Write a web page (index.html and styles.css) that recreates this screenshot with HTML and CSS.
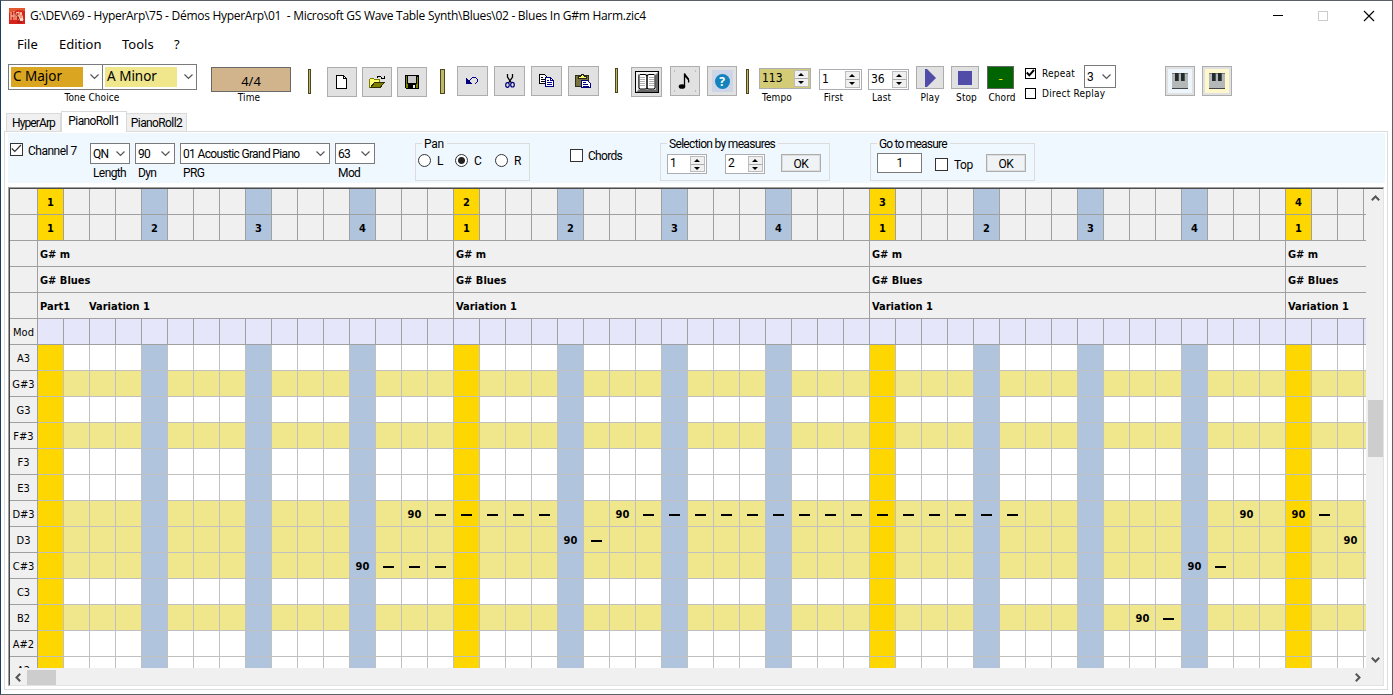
FILE: index.html
```
<!DOCTYPE html>
<html lang="en">
<head>
<meta charset="utf-8">
<title>HyperArp</title>
<link rel="stylesheet" href="styles.css">
</head>
<body>
<div class="window">
  <header class="titlebar">
    <svg class="app-icon" width="16" height="16" viewBox="0 0 16 16"><rect width="16" height="16" fill="#d8231c"/><path d="M0 0h16v3L9 2 0 5z" fill="#e2592f"/><path d="M2 4v8M5 3v9M2 8h3M7 12V5l3-1v4H7M10 12l2-8 2 8M10 9h4" stroke="#f9d9b0" fill="none"/><path d="M5 4l6 8M8 14h5" stroke="#59130d" opacity=".6"/><rect x="11" y="10" width="3" height="3" fill="#ffd8cf"/></svg>
    <span class="title">G:\DEV\69 - HyperArp\75 - Démos HyperArp\01&nbsp; - Microsoft GS Wave Table Synth\Blues\02 - Blues In G#m Harm.zic4</span>
    <svg class="winctl" width="104" height="12" viewBox="0 0 104 12"><path d="M0 5.500h10" stroke="#000"/><rect x="45.500" y="1.500" width="9" height="9" fill="none" stroke="#ccc"/><path d="M91 1l10 10M101 1L91 11" stroke="#000" stroke-width="1.100"/></svg>
  </header>
  <nav class="menu"><span class="m-file">File</span><span class="m-edit">Edition</span><span class="m-tools">Tools</span><span>?</span></nav>

  <div class="toolbar">
    <div class="tone">
      <div class="tone-boxes">
        <div class="bigcombo"><span class="major">C Major</span><svg width="9" height="6" viewBox="0 0 9 6"><path d="M.5.5l4 4 4-4" fill="none" stroke="#555" stroke-width="1.200"/></svg></div>
        <div class="bigcombo second"><span class="minor">A Minor</span><svg width="9" height="6" viewBox="0 0 9 6"><path d="M.5.5l4 4 4-4" fill="none" stroke="#555" stroke-width="1.200"/></svg></div>
      </div>
      <span class="lbl tone-lbl">Tone Choice</span>
    </div>
    <div class="time"><div class="time-box">4/4</div><span class="lbl">Time</span></div>
    <i class="sep s1"></i>
    <button class="tb new"><svg width="12" height="14" viewBox="0 0 12 14" shape-rendering="crispEdges"><path d="M.5.500h7l3 3v9.500h-10z" fill="#fff" stroke="#000"/><path d="M7.500.500v3h3" fill="none" stroke="#000"/></svg></button>
    <button class="tb open"><svg width="17" height="14" viewBox="0 0 17 14" shape-rendering="crispEdges"><path d="M.5 12.500v-8l1-1h3l1 1h5v3h-5l-4 5z" fill="#ffff70" stroke="#808000"/><path d="M1.500 12.500l4-5h10l-4.500 5z" fill="#808000" stroke="#303000"/><path d="M8 2.500l1-1h2l3 2M12 3.500h3v-3" fill="none" stroke="#000"/></svg></button>
    <button class="tb save"><svg width="15" height="14" viewBox="0 0 15 14" shape-rendering="crispEdges"><path d="M.5.500h13v13h-12l-1-1z" fill="#808000" stroke="#000"/><path d="M3 1h8v7H3z" fill="#c8c8c8"/><path d="M3 9h8v5H3zM12 1h1v1h-1z" fill="#000"/><path d="M8 10h2v3H8z" fill="#e8e8e8"/><path d="M2.500 1v7h9V1" stroke="#000" fill="none"/></svg></button>
    <i class="sep s2"></i>
    <button class="tb undo"><svg width="13" height="8" viewBox="0 0 13 8" shape-rendering="crispEdges"><path d="M0 1h1v1h1v1h1v1h1v1h1v1h1v1H0zM3 3h1V2h1V1h1V0h4v1H6v1H5v1H4v1H3zM10 1h1v1h-1zM11 2h1v3h-1zM10 5h1v1h-1zM9 6h1v1H9z" fill="#000080"/></svg></button>
    <button class="tb cut"><svg width="10" height="14" viewBox="0 0 10 14"><path d="M2.500 0v3l4 6M7.500 0v3l-4 6" fill="none" stroke="#000" stroke-width="1.300"/><ellipse cx="2.500" cy="11" rx="1.800" ry="2.300" fill="none" stroke="#000080" stroke-width="1.200"/><ellipse cx="7.500" cy="10.700" rx="1.800" ry="2.300" fill="none" stroke="#000080" stroke-width="1.200"/></svg></button>
    <button class="tb copy"><svg width="16" height="14" viewBox="0 0 16 14" shape-rendering="crispEdges"><path d="M.5.500h5l3 3v6h-8z" fill="#fff" stroke="#000"/><path d="M2 3.500h2M2 5.500h4M2 7.500h4" stroke="#000"/><path d="M6.500 3.500h5l3 3v6h-8z" fill="#fff" stroke="#000080"/><path d="M11.500 3.500v3h3M8 6.500h2M8 8.500h5M8 10.500h5" stroke="#000080" fill="none"/></svg></button>
    <button class="tb paste"><svg width="17" height="15" viewBox="0 0 17 15" shape-rendering="crispEdges"><rect x=".5" y="1.500" width="13" height="11" fill="#77733b" stroke="#303018"/><path d="M3.500 4.500v-2h2l1-2h2l1 2h2v2z" fill="#ffff66" stroke="#222"/><path d="M6.500 6.500h6l3 3v4h-9z" fill="#fff" stroke="#000080"/><path d="M8 8.500h3M8 10.500h5M8 12.500h6" stroke="#000080"/></svg></button>
    <i class="sep s3"></i>
    <button class="tb book"><svg width="24" height="22" viewBox="0 0 24 22"><rect x=".5" y=".5" width="23" height="21" fill="#9d9d9d" stroke="#000"/><path d="M1 21V1h22l-2 2H3v16z" fill="#f4f4f4"/><path d="M23 2v19H2l2-2h17V4z" fill="#686868"/><rect x="3" y="3" width="18" height="16" fill="#b4b4b4"/><path d="M4 4.500l1-1h5l2 1 2-1h5l1 1V17l-1 1h-5l-2-.500-2 .500H5l-1-1z" fill="#fff" stroke="#000"/><path d="M5 6.500h5M5 8.500h5M5 10.500h5M5 12.500h5M5 14.500h5M14 6.500h5M14 8.500h5M14 10.500h5M14 12.500h5M14 14.500h5" stroke="#b0b0b0"/><path d="M12 4v14" stroke="#000" stroke-width="1.500"/></svg></button>
    <button class="tb note"><svg width="24" height="22" viewBox="0 0 24 22"><path d="M1 1h1M22 1h1M1 21h1M22 21h1" stroke="#999"/><ellipse cx="9" cy="16.500" rx="3.300" ry="2.300" fill="#000"/><path d="M11.500 16V3.500c1 4 5.500 4 4 9" fill="none" stroke="#000" stroke-width="1.300"/><path d="M12 4l4 5-1 1-3-3z"/></svg></button>
    <button class="tb help"><span class="help-bg"><span class="help-dot">?</span></span></button>
    <i class="sep s4"></i>
    <div class="field tempo"><div class="spin"><span>113</span><i class="ud"></i></div><span class="lbl">Tempo</span></div>
    <div class="field first"><div class="spin"><span>1</span><i class="ud"></i></div><span class="lbl">First</span></div>
    <div class="field last"><div class="spin"><span>36</span><i class="ud"></i></div><span class="lbl">Last</span></div>
    <div class="act play"><button><svg width="11" height="18" viewBox="0 0 11 18"><path d="M0 0h2l9 9-9 9H0z" fill="#504ca8"/></svg></button><span class="lbl">Play</span></div>
    <div class="act stop"><button><svg width="14" height="14"><rect width="14" height="14" fill="#504ca8"/></svg></button><span class="lbl">Stop</span></div>
    <div class="act chord"><button>-</button><span class="lbl">Chord</span></div>
    <div class="opts">
      <div class="opt"><i class="cb"><svg width="9" height="8" viewBox="0 0 9 8"><path d="M.8 3.500l2.500 2.800L8 1" fill="none" stroke="#000" stroke-width="2"/></svg></i><span>Repeat</span></div>
      <div class="opt"><i class="cb"></i><span>Direct Replay</span></div>
    </div>
    <div class="rep-combo"><span>3</span><svg width="9" height="6" viewBox="0 0 9 6"><path d="M.5.5l4 4 4-4" fill="none" stroke="#555" stroke-width="1.200"/></svg></div>
    <button class="tb piano p1"><span><svg width="16" height="16" viewBox="0 0 16 16" shape-rendering="crispEdges"><rect width="16" height="16" fill="#b4b8b9"/><path d="M0 0h16v1H0z" fill="#777"/><path d="M0 15h16v1H0z" fill="#444"/><path d="M3 0h4v8H3zM9 0h4v8H9z" fill="#222b2b"/><path d="M6 0h1v8H6zM12 0h1v8h-1z" fill="#4a5454"/></svg></span></button>
    <button class="tb piano p2"><span><svg width="16" height="16" viewBox="0 0 16 16" shape-rendering="crispEdges"><rect width="16" height="16" fill="#b4b8b9"/><path d="M0 0h16v1H0z" fill="#777"/><path d="M0 15h16v1H0z" fill="#444"/><path d="M3 0h4v8H3zM9 0h4v8H9z" fill="#222b2b"/><path d="M6 0h1v8H6zM12 0h1v8h-1z" fill="#4a5454"/></svg></span></button>
  </div>

  <div class="tabs"><span class="tab t1">HyperArp</span><span class="tab active">PianoRoll1</span><span class="tab t3">PianoRoll2</span></div>

  <main class="page">
    <div class="params">
      <div class="chan"><i class="box"><svg width="11" height="9" viewBox="0 0 11 9"><path d="M.8 4.500l3 3L10 1" fill="none" stroke="#333" stroke-width="1.200"/></svg></i><span>Channel 7</span></div>
      <div class="sel len"><div class="combo"><span>QN</span><svg width="9" height="6" viewBox="0 0 9 6"><path d="M.5.5l4 4 4-4" fill="none" stroke="#555" stroke-width="1.200"/></svg></div><span>Length</span></div>
      <div class="sel dyn"><div class="combo"><span>90</span><svg width="9" height="6" viewBox="0 0 9 6"><path d="M.5.5l4 4 4-4" fill="none" stroke="#555" stroke-width="1.200"/></svg></div><span>Dyn</span></div>
      <div class="sel prg"><div class="combo"><span>01 Acoustic Grand Piano</span><svg width="9" height="6" viewBox="0 0 9 6"><path d="M.5.5l4 4 4-4" fill="none" stroke="#555" stroke-width="1.200"/></svg></div><span>PRG</span></div>
      <div class="sel mod"><div class="combo"><span>63</span><svg width="9" height="6" viewBox="0 0 9 6"><path d="M.5.5l4 4 4-4" fill="none" stroke="#555" stroke-width="1.200"/></svg></div><span>Mod</span></div>
      <div class="group pan"><span class="legend">Pan</span><i class="radio"></i><span class="rl">L</span><i class="radio on"></i><span class="rc">C</span><i class="radio"></i><span>R</span></div>
      <div class="chords"><i class="box"></i><span>Chords</span></div>
      <div class="group selection"><span class="legend sel-leg">Selection by measures</span><div class="spin sm"><span>1</span><i class="ud"></i></div><div class="spin sm two"><span>2</span><i class="ud"></i></div><button class="ok">OK</button></div>
      <div class="group goto"><span class="legend goto-leg">Go to measure</span><div class="entry">1</div><i class="box"></i><span class="top">Top</span><button class="ok">OK</button></div>
    </div>
    <div class="gridbox">
      <div class="roll" id="roll"></div>
      <div class="vscroll"><svg width="9" height="6" viewBox="0 0 9 6"><path d="M.8 5.200l3.700-3.700 3.700 3.700" fill="none" stroke="#555" stroke-width="2"/></svg><i></i><svg width="9" height="6" viewBox="0 0 9 6"><path d="M.8.800l3.700 3.700L8.200.8" fill="none" stroke="#555" stroke-width="2"/></svg></div>
      <div class="hscroll"><svg width="6" height="9" viewBox="0 0 6 9"><path d="M5.200.800L1.500 4.500l3.700 3.700" fill="none" stroke="#555" stroke-width="2"/></svg><i></i><svg class="right" width="6" height="9" viewBox="0 0 6 9"><path d="M.8.800l3.700 3.700L.8 8.200" fill="none" stroke="#555" stroke-width="2"/></svg></div>
    </div>
  </main>
</div>
<script src="roll.js"></script>
</body>
</html>
```
FILE: styles.css
```
* { box-sizing: border-box; }
body { margin: 0; width: 1393px; height: 695px; overflow: hidden; }
button { padding: 0; margin: 0; font: inherit; color: #000; border-radius: 0; }
svg { display: block; flex: none; }
i { font-style: normal; flex: none; }
span { white-space: pre; }

.window { width: 1393px; height: 695px; background: #fff; border: 1px solid #5c6068; border-left-color: #1c3d60; display: flex; flex-direction: column; color: #000; font: 12px/14px Roboto, sans-serif; }

.titlebar { height: 29px; flex: none; display: flex; align-items: center; padding-left: 8px; font: 12px/16px "Open Sans", sans-serif; }
.title { margin-left: 5px; width: 1243px; letter-spacing: -0.285px; }
.menu { height: 28px; flex: none; display: flex; align-items: center; padding-left: 16px; font: 13px/18px "Noto Sans", sans-serif; }
.m-file { width: 42px; }
.m-edit { width: 63px; }
.m-tools { width: 52px; }

.toolbar { height: 52px; flex: none; display: flex; align-items: flex-start; padding-left: 7px; }
.lbl { font: 10px/12px "DejaVu Sans Condensed", "DejaVu Sans", sans-serif; text-align: center; display: block; letter-spacing: 0.1px; }
.tone { width: 189px; margin-top: 6px; }
.tone-boxes { display: flex; }
.bigcombo { width: 95px; height: 26px; border: 1px solid #7a7a7a; display: flex; align-items: center; padding-left: 2px; gap: 7px; font: 13.5px/19px "Noto Sans", sans-serif; }
.bigcombo.second { margin-left: -1px; }
.bigcombo span { width: 72px; height: 20px; padding-left: 2px; }
.major { background: #daa520; }
.minor { background: #f0e68c; }
.tone-lbl { margin-top: 2px; width: 168px; }
.time { margin: 9px 0 0 14px; width: 80px; }
.time-box { height: 25px; border: 1px solid #696969; background: #d2b48c; font: 13px/27px "Noto Sans", sans-serif; text-align: center; }
.time .lbl { width: 76px; margin-top: 0; }
.sep { width: 3px; height: 25px; background: #bdb76b; border: 1px solid #4b461b; }
.s1 { margin: 11px 0 0 17px; }
.s2 { width: 5px; margin: 11px 0 0 13px; }
.s3 { margin: 10px 0 0 16px; }
.s4 { margin: 11px 0 0 9px; }
.tb { width: 30px; height: 30px; background: #e1e1e1; border: 1px solid #adadad; display: flex; align-items: center; justify-content: center; flex: none; }
.new { margin: 9px 0 0 16px; }
.open, .save { margin: 9px 0 0 5px; }
.undo, .cut, .copy, .paste, .book { width: 31px; }
.undo { margin: 8px 0 0 12px; }
.cut, .copy, .paste { margin: 8px 0 0 6px; }
.book { margin: 9px 0 0 13px; }
.note { margin: 8px 0 0 8px; }
.help { margin: 8px 0 0 7px; }
.help-bg { width: 21px; height: 22px; background: #cdd5e8; display: flex; align-items: center; justify-content: center; }
.help-dot { width: 15px; height: 15px; border-radius: 50%; background: #1382bd; color: #fff; font: bold 12px/15px "Open Sans", sans-serif; text-align: center; }

.spin { height: 21px; border: 1px solid #abadb3; background: #fff; display: flex; justify-content: space-between; padding-left: 2px; font: 12px/18px "DejaVu Sans Condensed", sans-serif; }
.ud { width: 15px; height: 17px; margin: 1px 1px 0 0; background: linear-gradient(#aaa, #aaa) 0 7px / 15px 1px no-repeat, #f0f0f0; border: 1px solid #bcbcbc; position: relative; }
.ud::before, .ud::after { content: ""; position: absolute; left: 3px; border: 3px solid transparent; border-top-width: 0; border-bottom: 3px solid #000; top: 2px; }
.ud::after { top: 10px; border-bottom-width: 0; border-top: 3px solid #000; }
.field .lbl { margin-top: 2px; }
.tempo { width: 52px; margin: 10px 0 0 10px; }
.tempo .spin { background: #d3cb75; }
.tempo .lbl { width: 36px; margin-top: 3px; }
.first { width: 43px; margin: 11px 0 0 8px; }
.first .lbl { width: 29px; }
.last { width: 41px; margin: 11px 0 0 6px; }
.last .lbl { width: 27px; }
.act { width: 28px; margin: 8px 0 0 7px; }
.act button { width: 28px; height: 23px; background: #e1e1e1; border: 1px solid #adadad; display: flex; align-items: center; justify-content: center; }
.act .lbl { margin-top: 3px; margin-right: -3px; }
.act.chord { margin-left: 8px; width: 27px; }
.chord button { width: 27px; background: #006400; border-color: #646464; color: #ffe600; font: 13px/20px "Noto Sans", sans-serif; }
.chord .lbl { margin-right: -3px; }
.play .lbl { margin-right: 0; }
.opts { margin: 10px 0 0 11px; width: 59px; }
.opt { display: flex; height: 11px; align-items: center; margin-bottom: 9px; gap: 6px; font: 10px/11px "DejaVu Sans Condensed", sans-serif; letter-spacing: 0.25px; }
.cb { width: 11px; height: 11px; border: 1px solid #000; background: #fff; }
.rep-combo { width: 32px; height: 23px; margin-top: 7px; border: 1px solid #7a7a7a; background: #fff; display: flex; align-items: center; justify-content: space-between; padding: 0 4px 0 2px; }
.piano { margin: 8px 0 0 7px; }
.piano.p1 { margin-left: 49px; }
.piano span { width: 24px; height: 24px; display: flex; align-items: center; justify-content: center; background: #edf6fd; }
.piano.p2 span { background: #fff8cc; }

.tabs { height: 21px; flex: none; display: flex; align-items: flex-end; padding-left: 5px; letter-spacing: -0.6px; }
.tab { height: 18px; background: #f0f0f0; border: 1px solid #d9d9d9; border-bottom: 0; line-height: 18px; text-align: center; }
.t1 { width: 55px; letter-spacing: -0.9px; }
.t3 { width: 60px; border-left: 0; }
.active { width: 66px; height: 21px; background: #fff; margin-bottom: -1px; z-index: 1; line-height: 19px; }

.page { height: 559px; width: 1384px; margin-left: 3px; flex: none; border: 1px solid #dcdcdc; padding: 1px 2px 0 3px; }
.params { height: 50px; background: #f0f8ff; display: flex; align-items: flex-start; letter-spacing: -0.5px; }
.box { width: 13px; height: 13px; border: 1px solid #333; background: #fff; }
.chan { display: flex; gap: 5px; margin: 10px 0 0 2px; width: 80px; line-height: 16px; }
.chan span { letter-spacing: -0.5px; }
.sel { margin: 10px 5px 0 0; }
.sel > span { display: block; margin: 1px 0 0 3px; line-height: 16px; letter-spacing: -0.6px; }
.combo { height: 21px; border: 1px solid #7a7a7a; background: #fff; display: flex; align-items: center; justify-content: space-between; padding: 0 4px 0 2px; letter-spacing: -0.66px; }
.len, .dyn, .mod { width: 40px; }
.prg { width: 150px; }
.group { height: 38px; margin-top: 10px; border: 1px solid #dcdcdc; position: relative; display: flex; align-items: flex-start; flex: none; }
.legend { position: absolute; left: 6px; top: -7px; padding: 0 3px 0 2px; background: #f0f8ff; letter-spacing: -0.3px; }
.sel-leg { letter-spacing: -0.68px; }
.goto-leg { letter-spacing: -0.8px; }
.pan { width: 115px; margin-left: 35px; padding: 10px 0 0 2px; line-height: 15px; }
.radio { width: 13px; height: 13px; border: 1px solid #333; border-radius: 50%; background: #fff; }
.radio.on { background: radial-gradient(circle, #222 0 3px, #fff 4px); }
.pan span:not(.legend) { margin-left: 6px; }
.pan .rl { width: 18px; }
.pan .rc { width: 21px; }
.chords { display: flex; gap: 5px; margin: 16px 0 0 40px; width: 90px; letter-spacing: -0.7px; }
.selection { width: 170px; padding: 10px 0 0 6px; }
.sm { width: 40px; height: 20px; font: 12px/17px Roboto, sans-serif; }
.sm .ud { height: 16px; }
.two { margin-left: 18px; }
.ok { width: 40px; height: 18px; border: 1px solid #adadad; box-shadow: inset 0 0 0 1px #dedede; background: #f0f3f5; line-height: 18px; letter-spacing: -0.4px; }
.selection .ok { margin-left: 16px; }
.goto { width: 165px; margin-left: 40px; padding: 10px 0 0 6px; }
.entry { width: 45px; height: 20px; margin-top: -1px; border: 1px solid #7a7a7a; background: #fff; text-align: center; line-height: 18px; }
.goto .box { margin: 4px 6px 0 13px; }
.goto .top { margin-top: 4px; width: 32px; letter-spacing: -0.5px; }

.gridbox { margin-top: 4px; height: 499px; width: 1376px; border: 1px solid #e3e3e3; border-top: 2px solid #696969; border-left: 2px solid #696969; display: grid; grid-template: 480px 17px / 1357px 17px; background: #f0f0f0; }
.gridbox { border-top-style: ridge; border-left-style: ridge; border-top-color: #a0a0a0; border-left-color: #a0a0a0; }
.roll { overflow: hidden; width: 1356px; height: 479px; font: 11px/27px "DejaVu Sans Condensed", "DejaVu Sans", sans-serif; }
.row { display: flex; height: 26px; width: 1400px; }
.row > span { flex: none; width: 26px; height: 26px; border-right: 1px solid #c0c0c0; border-bottom: 1px solid #c0c0c0; text-align: center; font-weight: bold; background: #fff; }
.row > .key { width: 28px; background: #f0f0f0; border-color: #a0a0a0; font-weight: normal; }
.row.head > span { background: #f0f0f0; border-color: #a0a0a0; }
.row.modrow > span:not(.key) { background: #e6e6fa; border-color: #a0a0a0; }
.row.scale > span:not(.key) { background: #f0e68c; }
.row > .wide { width: 416px; text-align: left; padding-left: 2px; }
.part { display: inline-block; width: 49px; }
.row > .measure.measure.measure { background: #ffd700; }
.row > .beat.beat.beat { background: #b0c4de; }
.hold { display: block; width: 11px; height: 2px; margin: 13px auto 0; background: #000; }
.vscroll { display: flex; flex-direction: column; align-items: center; padding-top: 6px; margin-left: -1px; }
.vscroll i { width: 15px; height: 57px; background: #cdcdcd; margin: 199px 0 200px; }
.hscroll { display: flex; align-items: center; padding-left: 5px; margin-top: -1px; }
.hscroll i { width: 29px; height: 15px; background: #cdcdcd; margin-left: 6px; }
.hscroll .right { margin-left: 1299px; }
```
FILE: roll.js
```
const COLS = 52;
const head = ["", "", "", "", ""];
const keys = ["Mod", "A3", "G#3", "G3", "F#3", "F3", "E3", "D#3", "D3", "C#3", "C3", "B2", "A#2", "A2"];
const scale = ["G#3", "F#3", "D#3", "D3", "C#3", "B2"];
// Each note is [start column, number of held columns after it].
const notes = {
  "D#3": [[14, 5], [22, 15], [46, 0], [48, 1]],
  "D3": [[20, 1], [50, 0]],
  "C#3": [[12, 3], [44, 1]],
  "B2": [[42, 1]]
};
const roll = document.getElementById("roll");
const kind = c => c % 16 === 0 ? "measure" : c % 4 === 0 ? "beat" : "";

function addRow(cls, label) {
  const row = document.createElement("div");
  row.className = "row " + cls;
  roll.append(row);
  addCell(row, "key", label);
  return row;
}
function addCell(row, cls, text) {
  const cell = document.createElement("span");
  cell.className = cls;
  cell.textContent = text;
  row.append(cell);
  return cell;
}

head.forEach((label, r) => {
  const row = addRow("head", label);
  if (r < 2) {
    for (let c = 0; c < COLS; c++) {
      let text = "";
      if (r === 0 && c % 16 === 0) text = c / 16 + 1;
      if (r === 1 && c % 4 === 0) text = c % 16 / 4 + 1;
      addCell(row, kind(c), text);
    }
  } else {
    for (let m = 0; m < 4; m++) {
      const cell = addCell(row, "wide", ["G# m", "G# Blues", "Variation 1"][r - 2]);
      if (r === 4 && m === 0) {
        const part = document.createElement("b");
        part.className = "part";
        part.textContent = "Part1";
        cell.prepend(part);
      }
    }
  }
});

keys.forEach(key => {
  const row = addRow(key === "Mod" ? "modrow" : scale.includes(key) ? "scale" : "", key);
  const cells = [];
  for (let c = 0; c < COLS; c++) cells.push(addCell(row, key === "Mod" ? "" : kind(c), ""));
  (notes[key] || []).forEach(([start, held]) => {
    cells[start].textContent = "90";
    for (let c = start + 1; c <= start + held; c++) {
      const bar = document.createElement("i");
      bar.className = "hold";
      cells[c].append(bar);
    }
  });
});
```
